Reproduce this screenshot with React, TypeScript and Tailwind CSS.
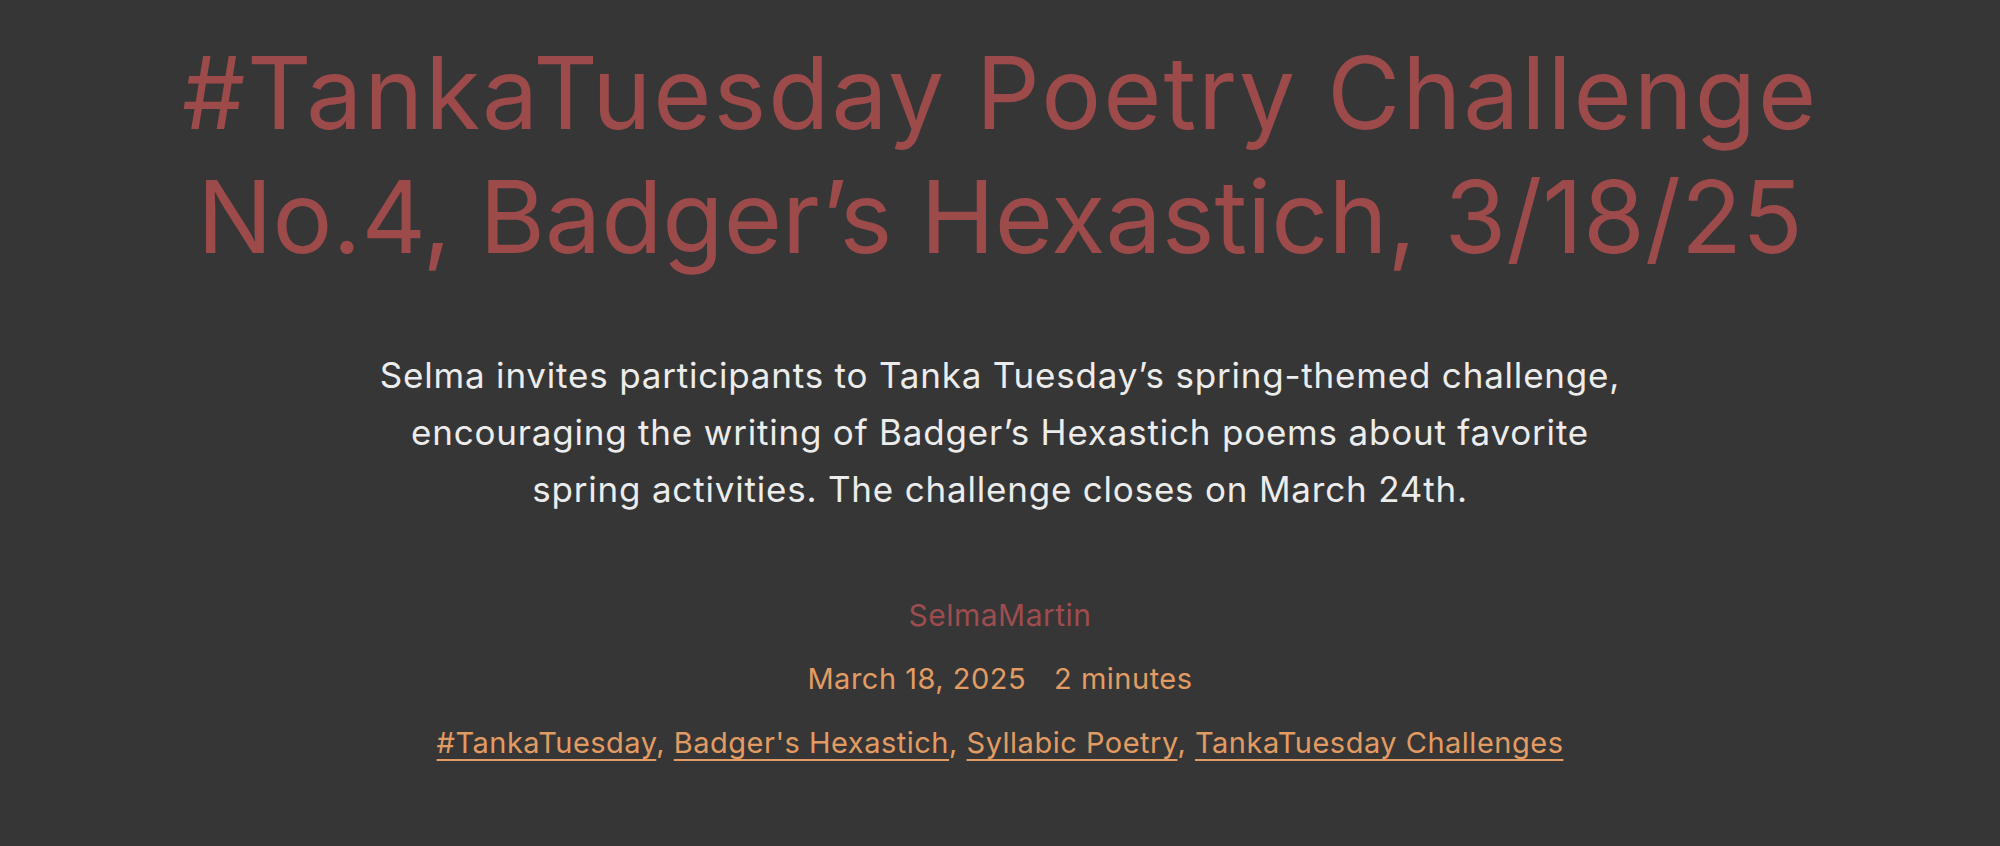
import React from 'react';

const tags = ['#TankaTuesday', "Badger's Hexastich", 'Syllabic Poetry', 'TankaTuesday Challenges'];

export default function App() {
    return (
        <div className="min-h-screen w-full bg-[#363636] font-['Inter',sans-serif] flex flex-col items-center">
            <h1 className="pt-[31px] text-center text-[100px] leading-[124px] font-normal text-[#9c4a4a]">
                <span className="block tracking-[1.9px]">#TankaTuesday Poetry Challenge</span>
                <span className="block tracking-[0px]">No.4, Badger’s Hexastich, 3/18/25</span>
            </h1>

            <p className="mt-[68px] max-w-[1270px] text-center text-[35px] leading-[57px] tracking-[0.8px] text-[#ececec]">
                Selma invites participants to Tanka Tuesday’s spring-themed challenge, encouraging the writing of Badger’s Hexastich poems about favorite spring activities. The challenge closes on March 24th.
            </p>

            <div className="mt-[65px] flex flex-col items-center text-[29px] tracking-[0.5px]">
                <a className="text-[30px] leading-[64px] text-[#9e4d4f]">SelmaMartin</a>
                <div className="flex gap-[28px] leading-[64px] text-[#e29c63]">
                    <span>March 18, 2025</span>
                    <span>2 minutes</span>
                </div>
                <div className="leading-[63px] text-[#e29c63]">
                    {tags.map((t, i) => (
                        <span key={t}>
                            <a className="underline underline-offset-[6px] decoration-[2px]">{t}</a>
                            {i < tags.length - 1 ? ', ' : ''}
                        </span>
                    ))}
                </div>
            </div>
        </div>
    );
}
